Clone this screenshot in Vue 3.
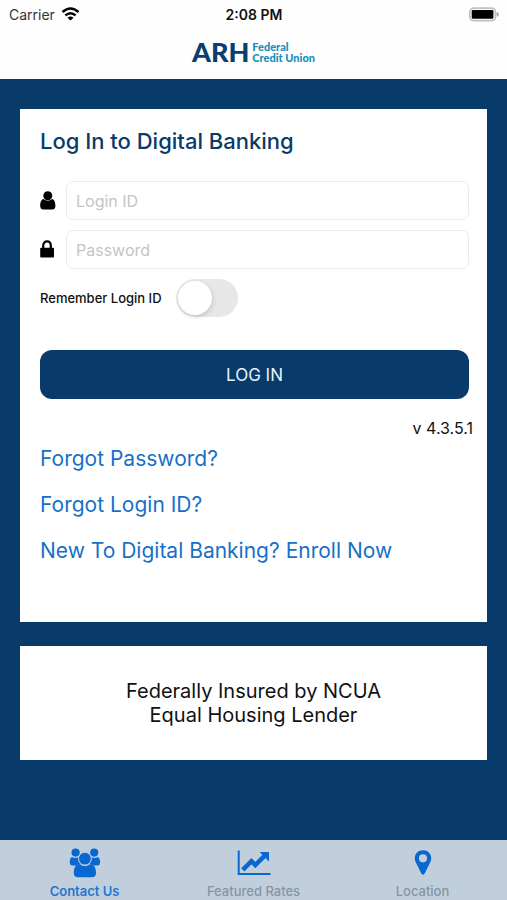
<script setup>
import { ref } from 'vue'

const loginId = ref('')
const password = ref('')
const remember = ref(false)
const active = ref('contact')
const tabs = [
  { id: 'contact', label: 'Contact Us' },
  { id: 'rates', label: 'Featured Rates' },
  { id: 'location', label: 'Location' },
]
</script>

<template>
  <div class="screen">
    <header class="top">
      <div class="status">
        <div class="carrier">
          <span>Carrier</span>
          <svg class="wifi" viewBox="0 0 18 14" aria-hidden="true">
            <path d="M1 5 Q9 -2 17 5" fill="none" stroke="#000" stroke-width="2.6" />
            <path d="M3.9 8.4 Q9 3.9 14.1 8.4" fill="none" stroke="#000" stroke-width="2.4" />
            <path d="M9 13.6 L6 10.7 Q9 8.2 12 10.7 Z" fill="#000" />
          </svg>
        </div>
        <span class="time">2:08 PM</span>
        <svg class="battery" viewBox="0 0 31 15" aria-hidden="true">
          <rect x="0.9" y="0.9" width="26.4" height="13" rx="4" fill="#fff" stroke="#c0c0c0" stroke-width="1.8" />
          <rect x="2.8" y="2.8" width="22.4" height="9.2" rx="1.4" fill="#000" />
          <path d="M28.6 5 Q30.8 5.6 30.8 7.4 Q30.8 9.2 28.6 9.8 Z" fill="#a4a4a4" />
        </svg>
      </div>
      <div class="brand">
        <span class="brand-main">ARH</span>
        <span class="brand-sub">Federal<br />Credit Union</span>
      </div>
    </header>

    <main class="content">
      <form class="card login" @submit.prevent>
        <h1>Log In to Digital Banking</h1>
        <div class="field">
          <label for="login-id" aria-label="Login ID">
            <svg viewBox="0 0 16 19" aria-hidden="true">
              <path d="M3.7 8 C1 8.6 0.2 11.5 0.2 14.8 C0.2 17.2 1.2 18.5 3.2 18.5 H12.4 C14.4 18.5 15.4 17.2 15.4 14.8 C15.4 11.5 14.6 8.6 11.9 8 C9.5 10.2 6.1 10.2 3.7 8 Z" />
              <circle cx="7.8" cy="4.7" r="4.5" />
            </svg>
          </label>
          <input id="login-id" v-model="loginId" type="text" placeholder="Login ID" />
        </div>
        <div class="field">
          <label for="password" aria-label="Password">
            <svg viewBox="0 0 16 19" aria-hidden="true">
              <path d="M3.2 9 V5.8 C3.2 2.9 5 1.4 7 1.4 C9 1.4 10.8 2.9 10.8 5.8 V9" fill="none" stroke="#000" stroke-width="2.2" />
              <rect x="0.2" y="7.8" width="13.8" height="9.6" rx="1" />
            </svg>
          </label>
          <input id="password" v-model="password" type="password" placeholder="Password" />
        </div>
        <div class="remember">
          <label for="remember">Remember Login ID</label>
          <input id="remember" v-model="remember" type="checkbox" role="switch" />
        </div>
        <button class="submit" type="submit">LOG IN</button>
        <p class="version">v 4.3.5.1</p>
        <nav class="links">
          <a href="#password">Forgot Password?</a>
          <a href="#login-id">Forgot Login ID?</a>
          <a href="#enroll">New To Digital Banking? Enroll Now</a>
        </nav>
      </form>

      <section class="card notice">
        <p>Federally Insured by NCUA<br />Equal Housing Lender</p>
      </section>
    </main>

    <nav class="tabs">
      <a
        v-for="tab in tabs"
        :key="tab.id"
        :href="'#' + tab.id"
        :class="{ active: active === tab.id }"
        @click="active = tab.id"
      >
        <svg v-if="tab.id === 'contact'" viewBox="0 0 32 30" aria-hidden="true">
          <circle cx="6.6" cy="4.6" r="4.1" />
          <circle cx="25.2" cy="4.6" r="4.1" />
          <path d="M3 9 Q6.2 10.8 9.3 9 Q9 13.8 12 16.4 Q9.4 15.8 7.4 17.4 H3.2 Q0.7 17.2 0.7 14.6 Q0.7 9.8 3 9 Z" />
          <path d="M28.8 9 Q25.6 10.8 22.5 9 Q22.8 13.8 19.8 16.4 Q22.4 15.8 24.4 17.4 H28.6 Q31.1 17.2 31.1 14.6 Q31.1 9.8 28.8 9 Z" />
          <path d="M10.4 16 C6.2 16.4 4.8 20.4 4.8 25 C4.8 28 6.4 29.3 9 29.3 H22.8 C25.4 29.3 27 28 27 25 C27 20.4 25.6 16.4 21.4 16 C18 18.8 13.8 18.8 10.4 16 Z" />
          <circle class="cutout" cx="15.9" cy="10.7" r="6.4" />
        </svg>
        <svg v-else-if="tab.id === 'rates'" viewBox="0 0 34 30" aria-hidden="true">
          <path d="M1.7 2.5 V26 H33.5" fill="none" stroke="currentColor" stroke-width="2" />
          <path d="M5.8 21.8 L14.4 13.2 L18.3 17.1 L28 7.4" fill="none" stroke="currentColor" stroke-width="4.6" />
          <path d="M22.6 4 H32 V13.4 Z" />
        </svg>
        <svg v-else viewBox="0 0 32 30" aria-hidden="true">
          <path fill-rule="evenodd" d="M16 2.3 C11.2 2.3 7.8 5.8 7.8 10.3 C7.8 12 8.2 13.2 9 14.8 L14.3 25.6 C15 27 17 27 17.7 25.6 L23 14.8 C23.8 13.2 24.2 12 24.2 10.3 C24.2 5.8 20.8 2.3 16 2.3 Z M16 6.2 A4.1 4.1 0 1 1 16 14.4 A4.1 4.1 0 1 1 16 6.2 Z" />
        </svg>
        <span>{{ tab.label }}</span>
      </a>
    </nav>
  </div>
</template>

<style>
body {
  margin: 0;
  background: #083b6a;
}
</style>

<style scoped>
.screen {
  display: flex;
  flex-direction: column;
  min-height: 100vh;
  background: #083b6a;
  color: #111;
  font-family: Inter, "Liberation Sans", sans-serif;
}
.screen * {
  box-sizing: border-box;
}
.top {
  height: 79px;
  background: #fefefe;
}
.status {
  display: grid;
  grid-template-columns: 1fr auto 1fr;
  align-items: center;
  height: 28px;
  padding: 0 8px 0 9px;
  font-size: 14px;
}
.carrier {
  display: flex;
  align-items: center;
  gap: 6px;
  color: #333;
}
.wifi {
  width: 19px;
  height: 14px;
}
.time {
  font-weight: 600;
}
.battery {
  width: 30px;
  height: 15px;
  justify-self: end;
}
.brand {
  display: flex;
  justify-content: center;
  align-items: center;
  gap: 3px;
  height: 48px;
}
.brand-main {
  color: #083f70;
  font: 900 27px/28px Lato, sans-serif;
}
.brand-sub {
  color: #168fbd;
  font: 900 11px/11px Lato, sans-serif;
}
.content {
  display: flex;
  flex: 1;
  flex-direction: column;
  gap: 24px;
  padding: 30px 20px 24px;
}
.card {
  background: #fff;
}
.login {
  display: flex;
  flex-direction: column;
  padding: 16px 18px 55px 20px;
}
h1 {
  margin: 0 0 24px;
  color: #083b6a;
  font-size: 22px;
  font-weight: 500;
  line-height: 32px;
}
.field {
  display: flex;
  align-items: center;
  gap: 10px;
  margin-bottom: 10px;
}
.field label {
  display: flex;
}
.field svg {
  width: 16px;
  height: 19px;
}
.field input {
  flex: 1;
  min-width: 0;
  height: 39px;
  padding: 0 9px;
  border: 1px solid #ebebed;
  border-radius: 7px;
  background: #fff;
  font: 400 16px/24px Inter, sans-serif;
}
.field input::placeholder {
  color: #c4c4c6;
  opacity: 1;
}
.remember {
  display: flex;
  align-items: center;
  gap: 14px;
  font-size: 13px;
  font-weight: 500;
}
.remember input {
  display: flex;
  align-items: center;
  width: 62px;
  height: 38px;
  margin: 0;
  padding: 2px;
  border-radius: 19px;
  background: #e7e7e9;
  appearance: none;
}
.remember input::before {
  width: 34px;
  height: 34px;
  border-radius: 50%;
  background: #fff;
  box-shadow: 1px 2px 4px #0002;
  content: "";
}
.remember input:checked {
  justify-content: flex-end;
  background: #0b67cf;
}
.submit {
  height: 49px;
  margin: 33px 0 18px;
  border: 0;
  border-radius: 12px;
  background: #083b6a;
  color: #e8f2fa;
  font: 400 17px/24px Inter, sans-serif;
}
.version {
  align-self: flex-end;
  margin: 0 -4px 4px 0;
  font-size: 16px;
  line-height: 22px;
}
.links {
  display: flex;
  flex-direction: column;
  align-items: flex-start;
  gap: 14px;
}
.links a {
  color: #1770c8;
  font-size: 21px;
  line-height: 32px;
  text-decoration: none;
}
.notice {
  padding: 33px 20px;
  font-size: 20px;
  line-height: 24px;
  text-align: center;
}
.notice p {
  margin: 0;
}
.tabs {
  display: grid;
  grid-template-columns: repeat(3, 1fr);
  height: 60px;
  background: #c1cfdc;
}
.tabs a {
  display: flex;
  flex-direction: column;
  align-items: center;
  gap: 5px;
  padding-top: 8px;
  color: #0967d2;
  font-size: 13px;
  font-weight: 500;
  line-height: 16px;
  text-decoration: none;
}
.tabs svg {
  height: 30px;
  fill: currentColor;
}
.cutout {
  stroke: #c1cfdc;
  stroke-width: 1;
}
.tabs span {
  color: #8496a6;
}
.tabs .active span {
  color: #2377cf;
  font-weight: 600;
}
</style>
